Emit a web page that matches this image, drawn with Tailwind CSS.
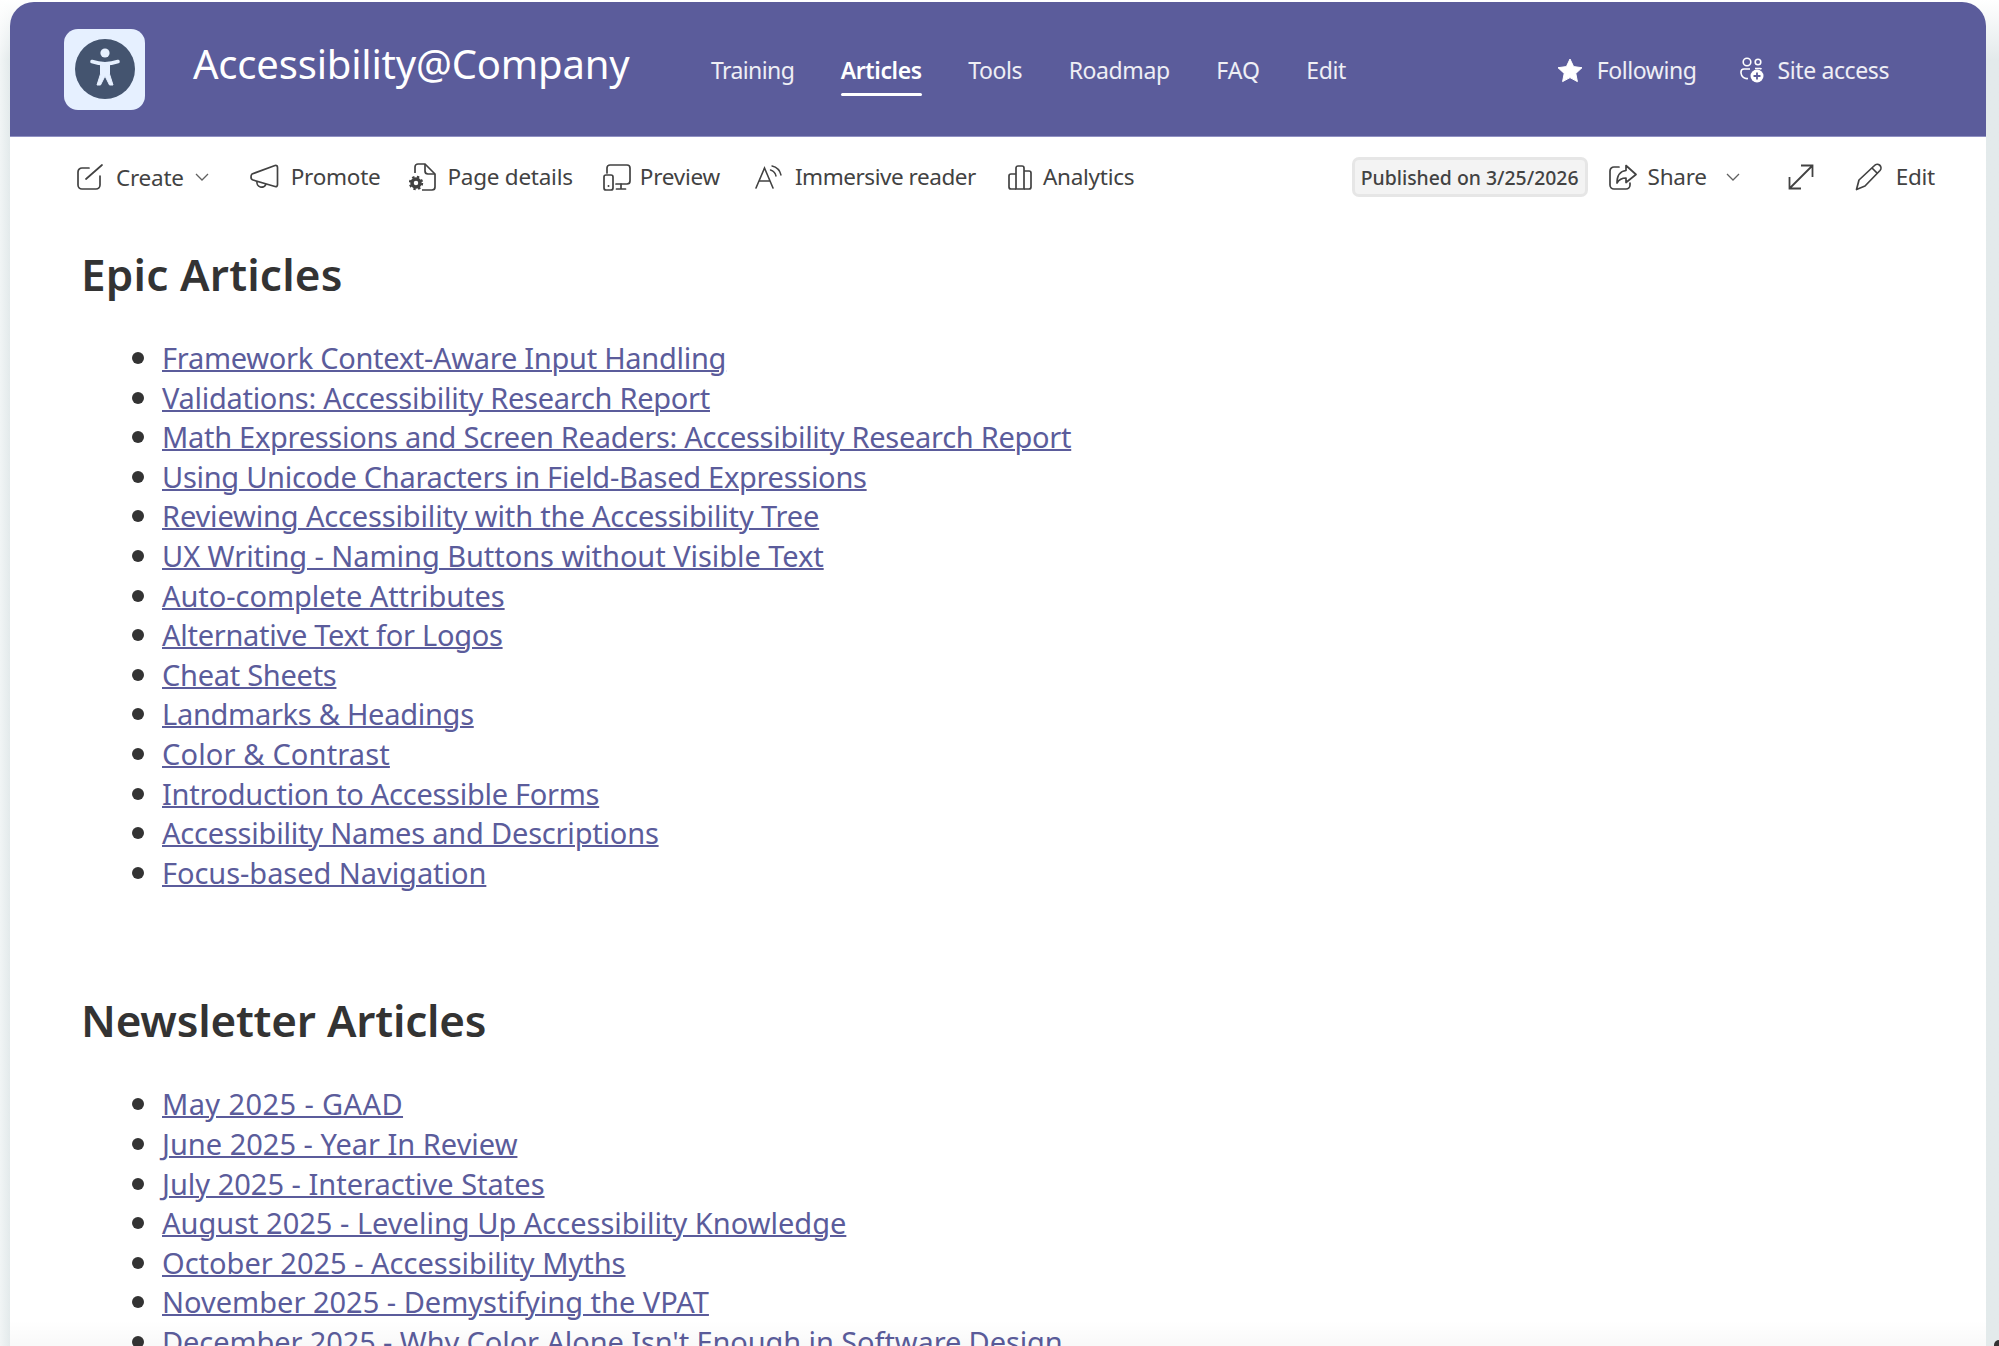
<!DOCTYPE html>
<html lang="en">
<head>
    <meta charset="UTF-8">
    <title>Epic Articles</title>
    <script src="https://cdn.jsdelivr.net/npm/@tailwindcss/browser@4"></script>
</head>
<body class="relative h-screen overflow-hidden bg-linear-to-b from-white to-[#e3eaeb] to-[60px] pl-[10px] pr-[13px] pt-[2px] font-['Noto_Sans',sans-serif]">
    <div class="absolute left-0 top-0 h-full w-[10px] bg-linear-to-r from-white/50 to-transparent"></div>
    <div class="absolute bottom-0 right-0 h-[6px] w-[5px] rounded-tl-full bg-[#333]"></div>
    <div class="relative h-full overflow-hidden rounded-t-[24px] bg-white">
        <!-- site header -->
        <header class="flex h-[135px] items-center border-b border-[#8f90c2] bg-[#5b5c9b] pl-[54px] pr-[97px] text-white">
            <div class="flex h-[81px] w-[81px] shrink-0 items-center justify-center rounded-[14px] bg-[#e6f0ff]">
                <svg width="60" height="60" viewBox="0 0 60 60">
                    <circle cx="30" cy="30" r="30" fill="#44546f"/>
                    <circle cx="30" cy="14" r="4.6" fill="#e6f0ff"/>
                    <path d="M17 22.5 Q30 27 43 22.5" fill="none" stroke="#e6f0ff" stroke-width="3.6" stroke-linecap="round"/>
                    <path d="M25.5 24 H34.5 V35 L38 46 H34.5 L30 37 L25.5 46 H22 L25.5 35 Z" fill="#e6f0ff" stroke="#e6f0ff" stroke-linejoin="round"/>
                </svg>
            </div>
            <div class="-mt-[10px] ml-[48px] w-[518px] shrink-0 text-[40px] leading-[48px] tracking-[-0.2px]">Accessibility@Company</div>
            <nav class="mt-[2px] flex items-center gap-[46.5px] text-[23px] tracking-[-0.4px]">
                <a class="tracking-[-0.6px] text-white/90">Training</a>
                <a class="relative font-semibold">Articles<span class="absolute -bottom-[9px] left-0 h-[3px] w-full rounded-full bg-white"></span></a>
                <a class="text-white/90">Tools</a>
                <a class="text-white/90">Roadmap</a>
                <a class="tracking-normal text-white/90">FAQ</a>
                <a class="text-white/90">Edit</a>
            </nav>
            <div class="mt-[2px] ml-auto flex items-center text-[23px] tracking-[-0.4px] text-white/90">
                <svg width="26" height="25" viewBox="0 0 26 25"><path d="M13 1 L16.6 8.6 L25 9.7 L18.8 15.4 L20.4 23.6 L13 19.6 L5.6 23.6 L7.2 15.4 L1 9.7 L9.4 8.6 Z" fill="#fff" stroke="#fff" stroke-linejoin="round"/></svg>
                <span class="ml-[14px]">Following</span>
                <svg class="ml-[43px]" width="25" height="26" viewBox="0 0 25 26" fill="none" stroke="#fff" stroke-width="1.6">
                    <circle cx="7" cy="5" r="3.8"/><circle cx="18" cy="5" r="2.8"/>
                    <path d="M10 12 H4 a3 3 0 0 0 -3 3 v1 a6 6 0 0 0 7 5.5"/><path d="M15 11.5 h5 a2.5 2.5 0 0 1 1.5 .6"/>
                    <circle cx="17" cy="19" r="6.5" fill="#fff" stroke="none"/>
                    <path d="M17 15.5 V22.5 M13.5 19 H20.5" stroke="#5b5c9b" stroke-width="1.8"/>
                </svg>
                <span class="ml-[13px]">Site access</span>
            </div>
        </header>

        <!-- command bar -->
        <div class="flex h-[80px] items-center pl-[67px] pr-[51px] text-[22.5px] tracking-[-0.25px] text-[#424242]">
            <svg width="26" height="26" viewBox="0 0 26 26" fill="none" stroke="#424242" stroke-width="1.7" stroke-linecap="round">
                <path d="M12 4 H5 a4 4 0 0 0 -4 4 V21 a4 4 0 0 0 4 4 H19 a4 4 0 0 0 4 -4 V12"/><path d="M9 15 L25 1"/>
            </svg>
            <span class="ml-[13px] mt-[1px]">Create</span>
            <svg class="ml-[11px]" width="14" height="8" viewBox="0 0 14 8" fill="none" stroke="#616161" stroke-width="1.3"><path d="M1 1 L7 7 L13 1"/></svg>
            <svg class="ml-[41px]" width="29" height="26" viewBox="0 0 29 26" fill="none" stroke="#424242" stroke-width="1.7" stroke-linejoin="round">
                <path d="M2 10 L25 1.5 Q27.5 1 27.5 3.5 V20.5 Q27.5 23 25 22.5 L3 16 Q1 15.5 1 13 Q1 11 2 10 Z"/><path d="M7 17.5 a4.7 4.7 0 0 0 9 2.6"/>
            </svg>
            <span class="ml-[12px]">Promote</span>
            <svg class="ml-[29px]" width="27" height="28" viewBox="0 0 27 28" fill="none" stroke="#424242" stroke-width="1.7">
                <path d="M6 10 V4 a3 3 0 0 1 3 -3 H16 L26 11 V24 a3 3 0 0 1 -3 3 H13"/><path d="M16 1 V8 a3 3 0 0 0 3 3 H26"/>
                <circle cx="7" cy="20" r="4" stroke-width="3.5"/>
                <circle cx="7" cy="20" r="6.2" stroke-width="2" stroke-dasharray="2.4 2.5"/>
            </svg>
            <span class="ml-[11px]">Page details</span>
            <svg class="ml-[30px]" width="28" height="27" viewBox="0 0 28 27" fill="none" stroke="#424242" stroke-width="1.7" stroke-linecap="round">
                <path d="M4 9 V4 a3 3 0 0 1 3 -3 H24 a3 3 0 0 1 3 3 V17 a3 3 0 0 1 -3 3 H13"/><path d="M18 20 V25 M13.5 25 H22.5"/>
                <rect x="1" y="11" width="9" height="15" rx="2"/><circle cx="5.5" cy="22" r="1" fill="#424242" stroke="none"/>
            </svg>
            <span class="ml-[9px]">Preview</span>
            <svg class="ml-[35px]" width="27" height="24" viewBox="0 0 27 24" fill="none" stroke="#424242" stroke-width="1.6" stroke-linecap="round">
                <path d="M1 23 L9.5 3 L18 23 M4.5 16 H14.5"/><path d="M15.5 5 A8 8 0 0 1 21 11" stroke-width="1.4"/><path d="M17 1 A12 12 0 0 1 26 10" stroke-width="1.4"/>
            </svg>
            <span class="ml-[13px] tracking-[-0.45px]">Immersive reader</span>
            <svg class="ml-[32px]" width="24" height="25" viewBox="0 0 24 25" fill="none" stroke="#424242" stroke-width="1.7" stroke-linejoin="round">
                <path d="M8 24 H3 a2 2 0 0 1 -2 -2 V11 a2 2 0 0 1 2 -2 H8"/><path d="M8 24 V3 a2 2 0 0 1 2 -2 H14 a2 2 0 0 1 2 2 V24 Z"/><path d="M16 6 H21 a2 2 0 0 1 2 2 V22 a2 2 0 0 1 -2 2 H16"/>
            </svg>
            <span class="ml-[11px]">Analytics</span>

            <div class="ml-auto flex h-[40px] items-center rounded-[7px] border-[3px] border-[#e6e6e6] bg-[#f3f3f3] px-[6px] pt-[2px] text-[19.4px] font-medium tracking-normal text-[#424242]">Published on 3/25/2026</div>
            <svg class="ml-[21px]" width="28" height="26" viewBox="0 0 28 26" fill="none" stroke="#424242" stroke-width="1.7" stroke-linejoin="round" stroke-linecap="round">
                <path d="M10 3 H5 a4 4 0 0 0 -4 4 V21 a4 4 0 0 0 4 4 H17 a4 4 0 0 0 4 -4 V19"/>
                <path d="M17 1.5 L27 10.5 L17 18.5 V14 Q11 14 8 19 Q8 7.5 17 6.5 Z"/>
            </svg>
            <span class="ml-[11px]">Share</span>
            <svg class="ml-[19px]" width="14" height="8" viewBox="0 0 14 8" fill="none" stroke="#616161" stroke-width="1.3"><path d="M1 1 L7 7 L13 1"/></svg>
            <svg class="ml-[48px]" width="26" height="26" viewBox="0 0 26 26" fill="none" stroke="#424242" stroke-width="1.8">
                <path d="M1.5 24.5 L24.5 1.5 M13 1.5 H24.5 V13 M1.5 13 V24.5 H13"/>
            </svg>
            <svg class="ml-[41px]" width="28" height="28" viewBox="0 0 28 28" fill="none" stroke="#424242" stroke-width="1.7" stroke-linejoin="round">
                <path d="M1.5 26.5 L4 17 L19.5 2.5 a3.6 3.6 0 0 1 5.5 5 L10 23 Z"/><path d="M17 5 L22.5 10.5"/>
            </svg>
            <span class="ml-[13px]">Edit</span>
        </div>

        <!-- page content -->
        <main class="pl-[71px] text-[#333]">
            <h2 class="mt-[27px] text-[44px] leading-[60px] font-semibold tracking-[0.2px]">Epic Articles</h2>
            <ul class="mt-[34px] ml-[1px] list-disc pl-[80px] text-[29px] leading-[38.6px] tracking-[-0.28px] text-[#5b5c9b] marker:text-[33px] marker:text-[#333] [&_a]:decoration-[2px]">
                <li><a class="underline">Framework Context-Aware Input Handling</a></li>
                <li><a class="underline">Validations: Accessibility Research Report</a></li>
                <li><a class="underline">Math Expressions and Screen Readers: Accessibility Research Report</a></li>
                <li><a class="underline">Using Unicode Characters in Field-Based Expressions</a></li>
                <li class="tracking-[-0.15px]"><a class="underline">Reviewing Accessibility with the Accessibility Tree</a></li>
                <li class="tracking-[-0.05px]"><a class="underline">UX Writing - Naming Buttons without Visible Text</a></li>
                <li class="tracking-[-0.05px]"><a class="underline">Auto-complete Attributes</a></li>
                <li><a class="underline">Alternative Text for Logos</a></li>
                <li><a class="underline">Cheat Sheets</a></li>
                <li><a class="underline">Landmarks &amp; Headings</a></li>
                <li class="tracking-[0.15px]"><a class="underline">Color &amp; Contrast</a></li>
                <li><a class="underline">Introduction to Accessible Forms</a></li>
                <li class="tracking-[-0.2px]"><a class="underline">Accessibility Names and Descriptions</a></li>
                <li class="tracking-[-0.05px]"><a class="underline">Focus-based Navigation</a></li>
            </ul>
            <h2 class="mt-[98px] text-[44px] leading-[60px] font-semibold tracking-[-0.2px]">Newsletter Articles</h2>
            <ul class="mt-[34px] ml-[1px] list-disc pl-[80px] text-[29px] leading-[38.6px] text-[#5b5c9b] marker:text-[33px] marker:text-[#333] [&_a]:decoration-[2px]">
                <li class="tracking-[0.4px]"><a class="underline">May 2025 - GAAD</a></li>
                <li><a class="underline">June 2025 - Year In Review</a></li>
                <li><a class="underline">July 2025 - Interactive States</a></li>
                <li><a class="underline">August 2025 - Leveling Up Accessibility Knowledge</a></li>
                <li><a class="underline">October 2025 - Accessibility Myths</a></li>
                <li><a class="underline">November 2025 - Demystifying the VPAT</a></li>
                <li class="tracking-[-0.1px]"><a class="underline">December 2025 - Why Color Alone Isn't Enough in Software Design</a></li>
            </ul>
        </main>
        <div class="absolute bottom-0 left-0 h-[26px] w-full bg-linear-to-b from-transparent to-black/[0.025]"></div>
    </div>
</body>
</html>
